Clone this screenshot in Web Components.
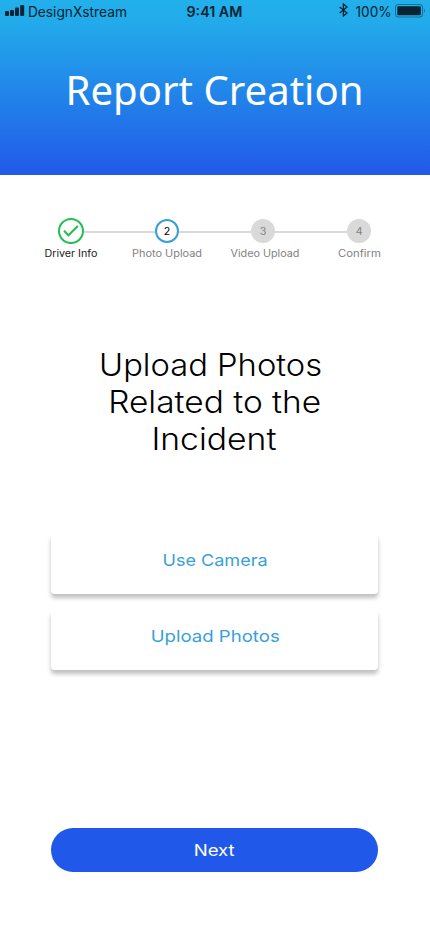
<!DOCTYPE html>
<html lang="en">
<head>
<meta charset="utf-8">
<title>Report Creation</title>
<style>
html,body{margin:0;height:100%;background:#fff;overflow:hidden}
body{font-family:Inter,"Liberation Sans",sans-serif}
</style>
</head>
<body>
<report-screen></report-screen>
<script>
const define=(name,html,ready)=>customElements.define(name,class extends HTMLElement{
  constructor(){super();this.attachShadow({mode:'open'}).innerHTML=html;}
  connectedCallback(){if(ready)ready.call(this,this.shadowRoot);}
});

// One line of text stretched horizontally to the width given in pixels.
define('fit-text',`<style>
:host{display:flex;justify-content:center;white-space:nowrap}
span{display:block;flex:none}
</style><span></span>`,function(r){
  const s=r.querySelector('span'),w=+this.getAttribute('width');
  s.textContent=this.getAttribute('text');
  this.style.width=w+'px';
  s.style.transform='scaleX('+w/s.getBoundingClientRect().width+')';
});

define('status-bar',`<style>
:host{display:grid;grid-template-columns:1fr auto 1fr;align-items:center;height:24px;color:#062431;font-size:14px;line-height:24px}
.l,.r{display:flex;align-items:center}
.l{padding-left:5px;gap:3px}
.r{justify-content:flex-end;padding-right:4px}
.t{font-weight:600;margin-right:2px}
svg{display:block;flex:none}
.sig{margin-top:-3px}.bt{margin:-4px 8px 0 0}.bat{margin:-2px 0 0 3px}
</style>
<div class="l"><svg class="sig" width="20" height="12" fill="currentColor"><rect y="6" width="4" height="5" rx="1"/><rect x="5" y="5" width="4" height="6" rx="1"/><rect x="10" y="2.5" width="4" height="8.5" rx="1"/><rect x="15.2" y="0" width="4" height="11" rx="1"/></svg><fit-text width="99" text="DesignXstream"></fit-text></div>
<fit-text class="t" width="56" text="9:41 AM"></fit-text>
<div class="r"><svg class="bt" width="9" height="14" fill="none" stroke="currentColor" stroke-width="1.3"><path d="M.7 4 8 10 4.4 13V1L8 4 .7 10"/></svg><fit-text width="36" text="100%"></fit-text><svg class="bat" width="31.5" height="14"><rect x=".5" y=".5" width="27" height="12.5" rx="2.5" fill="none" stroke="#062431" stroke-opacity=".45"/><rect x="2.3" y="2.3" width="23.5" height="9" rx=".8" fill="#062431"/><path d="M29 4.5q2 2.3 0 4.6z" fill="#062431" opacity=".4"/></svg></div>`);

define('page-header',`<style>
:host{display:flex;flex-direction:column;height:175px;background:linear-gradient(#22b0eb 0,#22abea 12%,#2159e9 100%);color:#fff}
.title{align-self:center;margin:38px 2px 0 0;font:40.5px/56px "Noto Sans",sans-serif}
</style><status-bar></status-bar><fit-text class="title" width="298" text="Report Creation"></fit-text>`);

define('progress-step',`<style>
:host{display:flex;flex-direction:column;align-items:center;width:96px;font-size:9.7px;color:#828282}
.dot{box-sizing:border-box;width:24px;height:24px;border-radius:50%;background:#d9d9d9;display:grid;place-items:center;margin:1px 0;z-index:1}
:host([state=active]) .dot{background:#fff;border:2px solid #399fdb;color:#000}
:host([state=done]) .dot{background:#fff;border:2px solid #21bf53;width:26px;height:26px;margin:0}
:host([state=done]){color:#222}
svg{display:none}
:host([state=done]) svg{display:block}
:host([state=done]) .n{display:none}
.n{transform:scaleX(1.1)}
.cap{display:flex;margin-top:3px;line-height:14px}
</style><div class="dot"><span class="n"></span><svg width="16" height="12" fill="none" stroke="#21bf53" stroke-width="2"><path d="M1 5.8 5.5 10.3 14.8 1"/></svg></div><div class="cap"><slot></slot></div>`,function(r){r.querySelector('.n').textContent=this.getAttribute('number');});

define('progress-steps',`<style>
:host{display:flex;padding:43px 0 0 23px;background:linear-gradient(#d9d9d9,#d9d9d9) 71px 55.5px/288px 2px no-repeat}
</style>
<progress-step number="1" state="done"><fit-text width="53" text="Driver Info"></fit-text></progress-step>
<progress-step number="2" state="active"><fit-text width="70" text="Photo Upload"></fit-text></progress-step>
<progress-step number="3"><fit-text width="69" text="Video Upload" style="margin-left:3px"></fit-text></progress-step>
<progress-step number="4"><fit-text width="43" text="Confirm"></fit-text></progress-step>`);

define('screen-heading',`<style>
:host{display:flex;flex-direction:column;align-items:center;width:422px;margin-top:85px;font:300 30.7px/37px Inter,sans-serif;color:#000}
</style>
<fit-text width="223" text="Upload Photos"></fit-text>
<fit-text width="213" text="Related to the" style="margin-left:7px"></fit-text>
<fit-text width="125" text="Incident" style="margin-left:6px"></fit-text>`);

define('action-button',`<style>
:host{display:block}
button{display:flex;box-sizing:border-box;width:100%;height:60px;margin:0;padding:0 0 8px;align-items:center;justify-content:center;border:0;border-radius:4px;background:#fff;color:#389fdb;font:400 16.5px/24px Inter,sans-serif;box-shadow:0 4px 4px rgba(0,0,0,.25)}
:host([primary]) button{height:44px;padding:0 0 1px;border-radius:22px;background:#2059e9;color:#fff;box-shadow:none}
</style><button><slot></slot></button>`);

define('report-screen',`<style>
:host{display:flex;flex-direction:column;width:430px;height:932px;background:#fff}
.actions{display:grid;gap:16px;margin:77px 52px 0 51px}
.next{margin:158px 52px 0 51px}
</style>
<page-header></page-header>
<progress-steps></progress-steps>
<screen-heading></screen-heading>
<div class="actions">
<action-button><fit-text width="105" text="Use Camera" style="margin-left:1px"></fit-text></action-button>
<action-button><fit-text width="129" text="Upload Photos" style="margin-left:1px"></fit-text></action-button>
</div>
<action-button class="next" primary><fit-text width="41" text="Next"></fit-text></action-button>`);
</script>
</body>
</html>
